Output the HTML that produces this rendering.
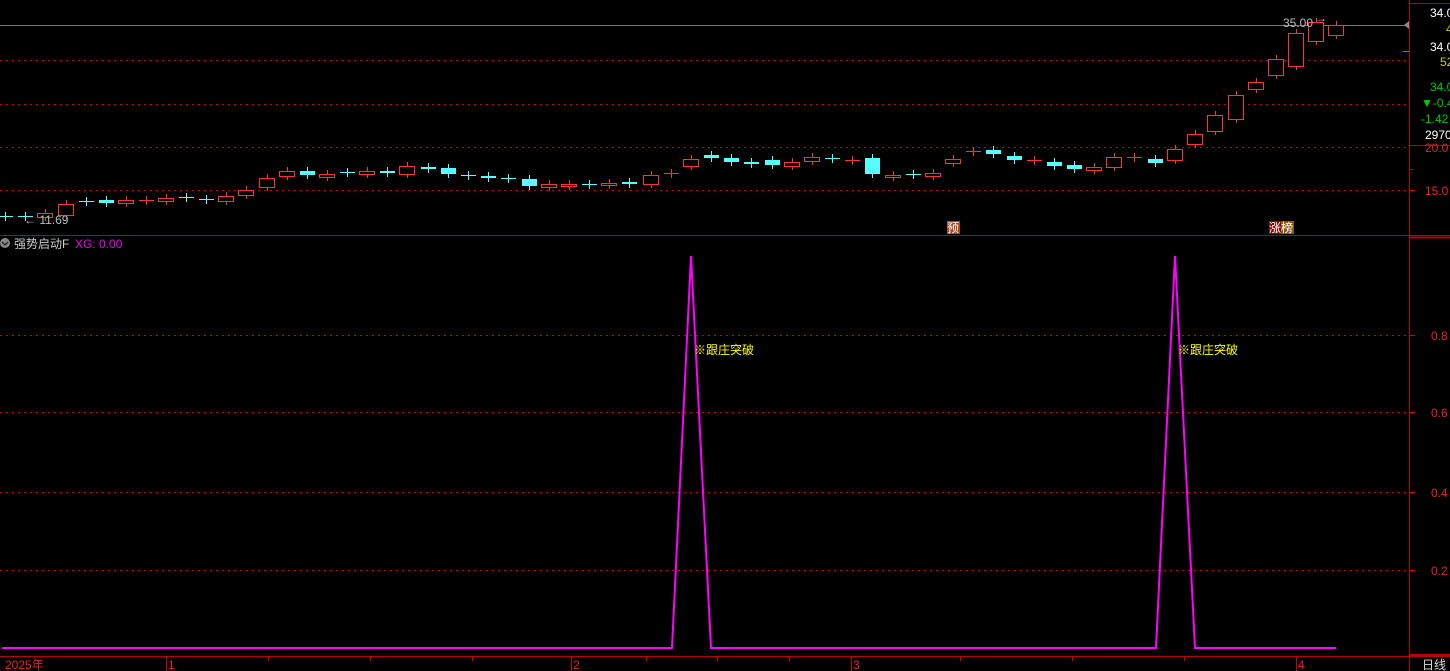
<!DOCTYPE html>
<html><head><meta charset="utf-8"><style>
html,body{margin:0;padding:0;background:#000;overflow:hidden}
svg{display:block}
text{font-family:"Liberation Sans","Noto Sans CJK SC",sans-serif;font-size:12px}
</style></head><body>
<svg id="s" width="1450" height="671" viewBox="0 0 1450 671" xmlns="http://www.w3.org/2000/svg">
<rect width="1450" height="671" fill="#000"/>
<!-- upper grid -->
<line x1="0" y1="25.5" x2="1408" y2="25.5" stroke="#777" stroke-width="1"/>
<g stroke="#c00" stroke-width="1" stroke-dasharray="2,4">
<line x1="0" y1="60.5" x2="1408" y2="60.5"/>
<line x1="0" y1="104.5" x2="1408" y2="104.5"/>
<line x1="0" y1="147.5" x2="1408" y2="147.5"/>
<line x1="0" y1="190.5" x2="1408" y2="190.5"/>
<line x1="0" y1="335.5" x2="1408" y2="335.5"/>
<line x1="0" y1="412.5" x2="1408" y2="412.5"/>
<line x1="0" y1="492.5" x2="1408" y2="492.5"/>
<line x1="0" y1="570.5" x2="1408" y2="570.5"/>
</g>
<!-- panel borders -->
<line x1="0" y1="235.5" x2="1450" y2="235.5" stroke="#b00"/>
<line x1="0" y1="656.5" x2="1450" y2="656.5" stroke="#b00"/>
<line x1="1409.5" y1="0" x2="1409.5" y2="671" stroke="#b00"/>
<line x1="1410" y1="3.5" x2="1450" y2="3.5" stroke="#b00"/>
<line x1="1410" y1="145.5" x2="1450" y2="145.5" stroke="#b00"/>
<line x1="1410" y1="237.5" x2="1450" y2="237.5" stroke="#b00" stroke-width="2"/>
<line x1="1410" y1="655" x2="1450" y2="655" stroke="#b00" stroke-width="2"/>
<g id="candles"></g>
<!-- labels upper -->
<text x="1283" y="27" fill="#bbb">35.00</text>
<text x="1315" y="22" fill="#bbb" font-size="10">→</text>
<text x="24" y="224" fill="#bbb">← 11.69</text>
<rect x="947" y="221" width="13" height="13" fill="#b24a1a"/>
<text x="947" y="232" fill="#fff">预</text>
<rect x="1269" y="221" width="12" height="13" fill="#8a0a0a"/>
<rect x="1281" y="221" width="13" height="13" fill="#8a5a10"/>
<text x="1269" y="232" fill="#fff">涨榜</text>
<!-- right axis -->
<polygon points="1404,25 1409,21 1409,29" fill="#888"/>
<line x1="1403" y1="51.5" x2="1409" y2="51.5" stroke="#0c0"/>
<text x="1430" y="17" fill="#fff">34.0</text>
<text x="1446" y="33" fill="#cc0">4</text>
<text x="1430" y="51" fill="#fff">34.0</text>
<text x="1440" y="66" fill="#cc0">52</text>
<text x="1430" y="91" fill="#0c0">34.0</text>
<text x="1421" y="107" fill="#0c0">▼-0.4</text>
<text x="1421" y="123" fill="#0c0">-1.42</text>
<text x="1425" y="139" fill="#fff">2970</text>
<text x="1425" y="152" fill="#e22">20.0</text>
<line x1="1410" y1="169.5" x2="1413" y2="169.5" stroke="#c00"/>
<line x1="1410" y1="190.5" x2="1415" y2="190.5" stroke="#c00"/>
<text x="1425" y="195" fill="#e22">15.0</text>
<g fill="#e22">
<line x1="1410" y1="335.5" x2="1415" y2="335.5" stroke="#c00"/>
<text x="1431" y="340">0.8</text>
<line x1="1410" y1="412.5" x2="1415" y2="412.5" stroke="#c00"/>
<text x="1431" y="417">0.6</text>
<line x1="1410" y1="492.5" x2="1415" y2="492.5" stroke="#c00"/>
<text x="1431" y="497">0.4</text>
<line x1="1410" y1="570.5" x2="1415" y2="570.5" stroke="#c00"/>
<text x="1431" y="575">0.2</text>
</g>
<!-- indicator title -->
<circle cx="5" cy="243" r="5" fill="#888"/>
<path d="M2,242 L5,245 L8,242" stroke="#222" stroke-width="1.3" fill="none"/>
<text x="14" y="248" fill="#ccc">强势启动F</text>
<text x="75" y="248" fill="#e0e">XG: 0.00</text>
<!-- indicator line -->
<polyline points="2,648 672,648 691,256 711,648 1156,648 1175,256 1195,648 1336,648" fill="none" stroke="#f0f" stroke-width="2"/>
<text x="694" y="354" fill="#ff0">※跟庄突破</text>
<text x="1178" y="354" fill="#ff0">※跟庄突破</text>
<!-- time axis -->
<g stroke="#c00">
<line x1="166.5" y1="657" x2="166.5" y2="671"/>
<line x1="571.5" y1="657" x2="571.5" y2="671"/>
<line x1="851.5" y1="657" x2="851.5" y2="671"/>
<line x1="1296.5" y1="657" x2="1296.5" y2="671"/>
<line x1="268.5" y1="657" x2="268.5" y2="661"/>
<line x1="370.5" y1="657" x2="370.5" y2="661"/>
<line x1="472.5" y1="657" x2="472.5" y2="661"/>
<line x1="646.5" y1="657" x2="646.5" y2="661"/>
<line x1="717.5" y1="657" x2="717.5" y2="661"/>
<line x1="789.5" y1="657" x2="789.5" y2="661"/>
<line x1="960.5" y1="657" x2="960.5" y2="661"/>
<line x1="1072.5" y1="657" x2="1072.5" y2="661"/>
<line x1="1184.5" y1="657" x2="1184.5" y2="661"/>
</g>
<g fill="#e22">
<text x="5" y="669">2025年</text>
<text x="168" y="669">1</text>
<text x="573" y="669">2</text>
<text x="853" y="669">3</text>
<text x="1298" y="669">4</text>
</g>
<text x="1422" y="669" fill="#ddd">日线</text>
</svg>
<script>
var d=[[5,'c',216,217],[25,'c',216,217],[45,'r',213,217],[66,'r',204,215],[86,'c',201,202],[106,'c',200,203],[126,'r',200,203],[146,'r',200,201],[166,'r',198,201],[186,'c',197,198],[206,'c',199,200],[226,'r',196,201],[246,'r',190,195],[267,'r',178,187],[287,'r',171,176],[307,'c',171,175],[327,'r',174,177],[347,'c',172,173],[367,'r',171,174],[387,'c',171,173],[407,'r',166,174],[428,'c',167,169],[448,'c',168,174],[468,'c',175,176],[488,'c',176,178],[508,'c',178,179],[529,'c',179,186],[549,'r',184,187],[569,'r',184,186],[589,'c',184,185],[609,'r',183,185],[629,'c',182,184],[651,'r',175,184],[671,'r',173,174],[691,'r',159,166],[711,'c',155,158],[731,'c',158,162],[751,'c',162,164],[772,'c',160,165],[792,'r',162,166],[812,'r',157,161],[832,'c',158,159],[852,'R',160,161],[872,'c',158,174],[893,'r',175,177],[913,'c',174,175],[933,'r',173,176],[953,'r',159,163],[973,'r',151,152],[993,'c',150,154],[1014,'c',156,160],[1034,'R',160,161],[1054,'c',162,166],[1074,'c',165,169],[1094,'r',167,170],[1114,'r',157,167],[1134,'R',157,158],[1155,'c',159,163],[1175,'r',149,160],[1195,'r',134,144],[1215,'r',115,131],[1236,'r',95,119],[1256,'r',82,89],[1276,'r',59,75],[1296,'r',33,66],[1316,'r',22,41],[1336,'r',25,35]];
var h='';
d.forEach(function(c){var x=c[0],t=c[2],b=c[3],col=c[1]=='c'?'#5ff':'#f33';
h+='<line x1="'+(x+.5)+'" y1="'+(t-4)+'" x2="'+(x+.5)+'" y2="'+(b+4)+'" stroke="'+col+'"/>';
if(c[1]=='r'&&b-t>1)h+='<rect x="'+(x-7.5)+'" y="'+(t+.5)+'" width="15" height="'+(b-t)+'" fill="#000" stroke="'+col+'"/>';
else h+='<rect x="'+(x-7)+'" y="'+t+'" width="15" height="'+Math.max(b-t,1)+'" fill="'+col+'"/>';});
document.getElementById('candles').innerHTML=h;
</script>
</body></html>
